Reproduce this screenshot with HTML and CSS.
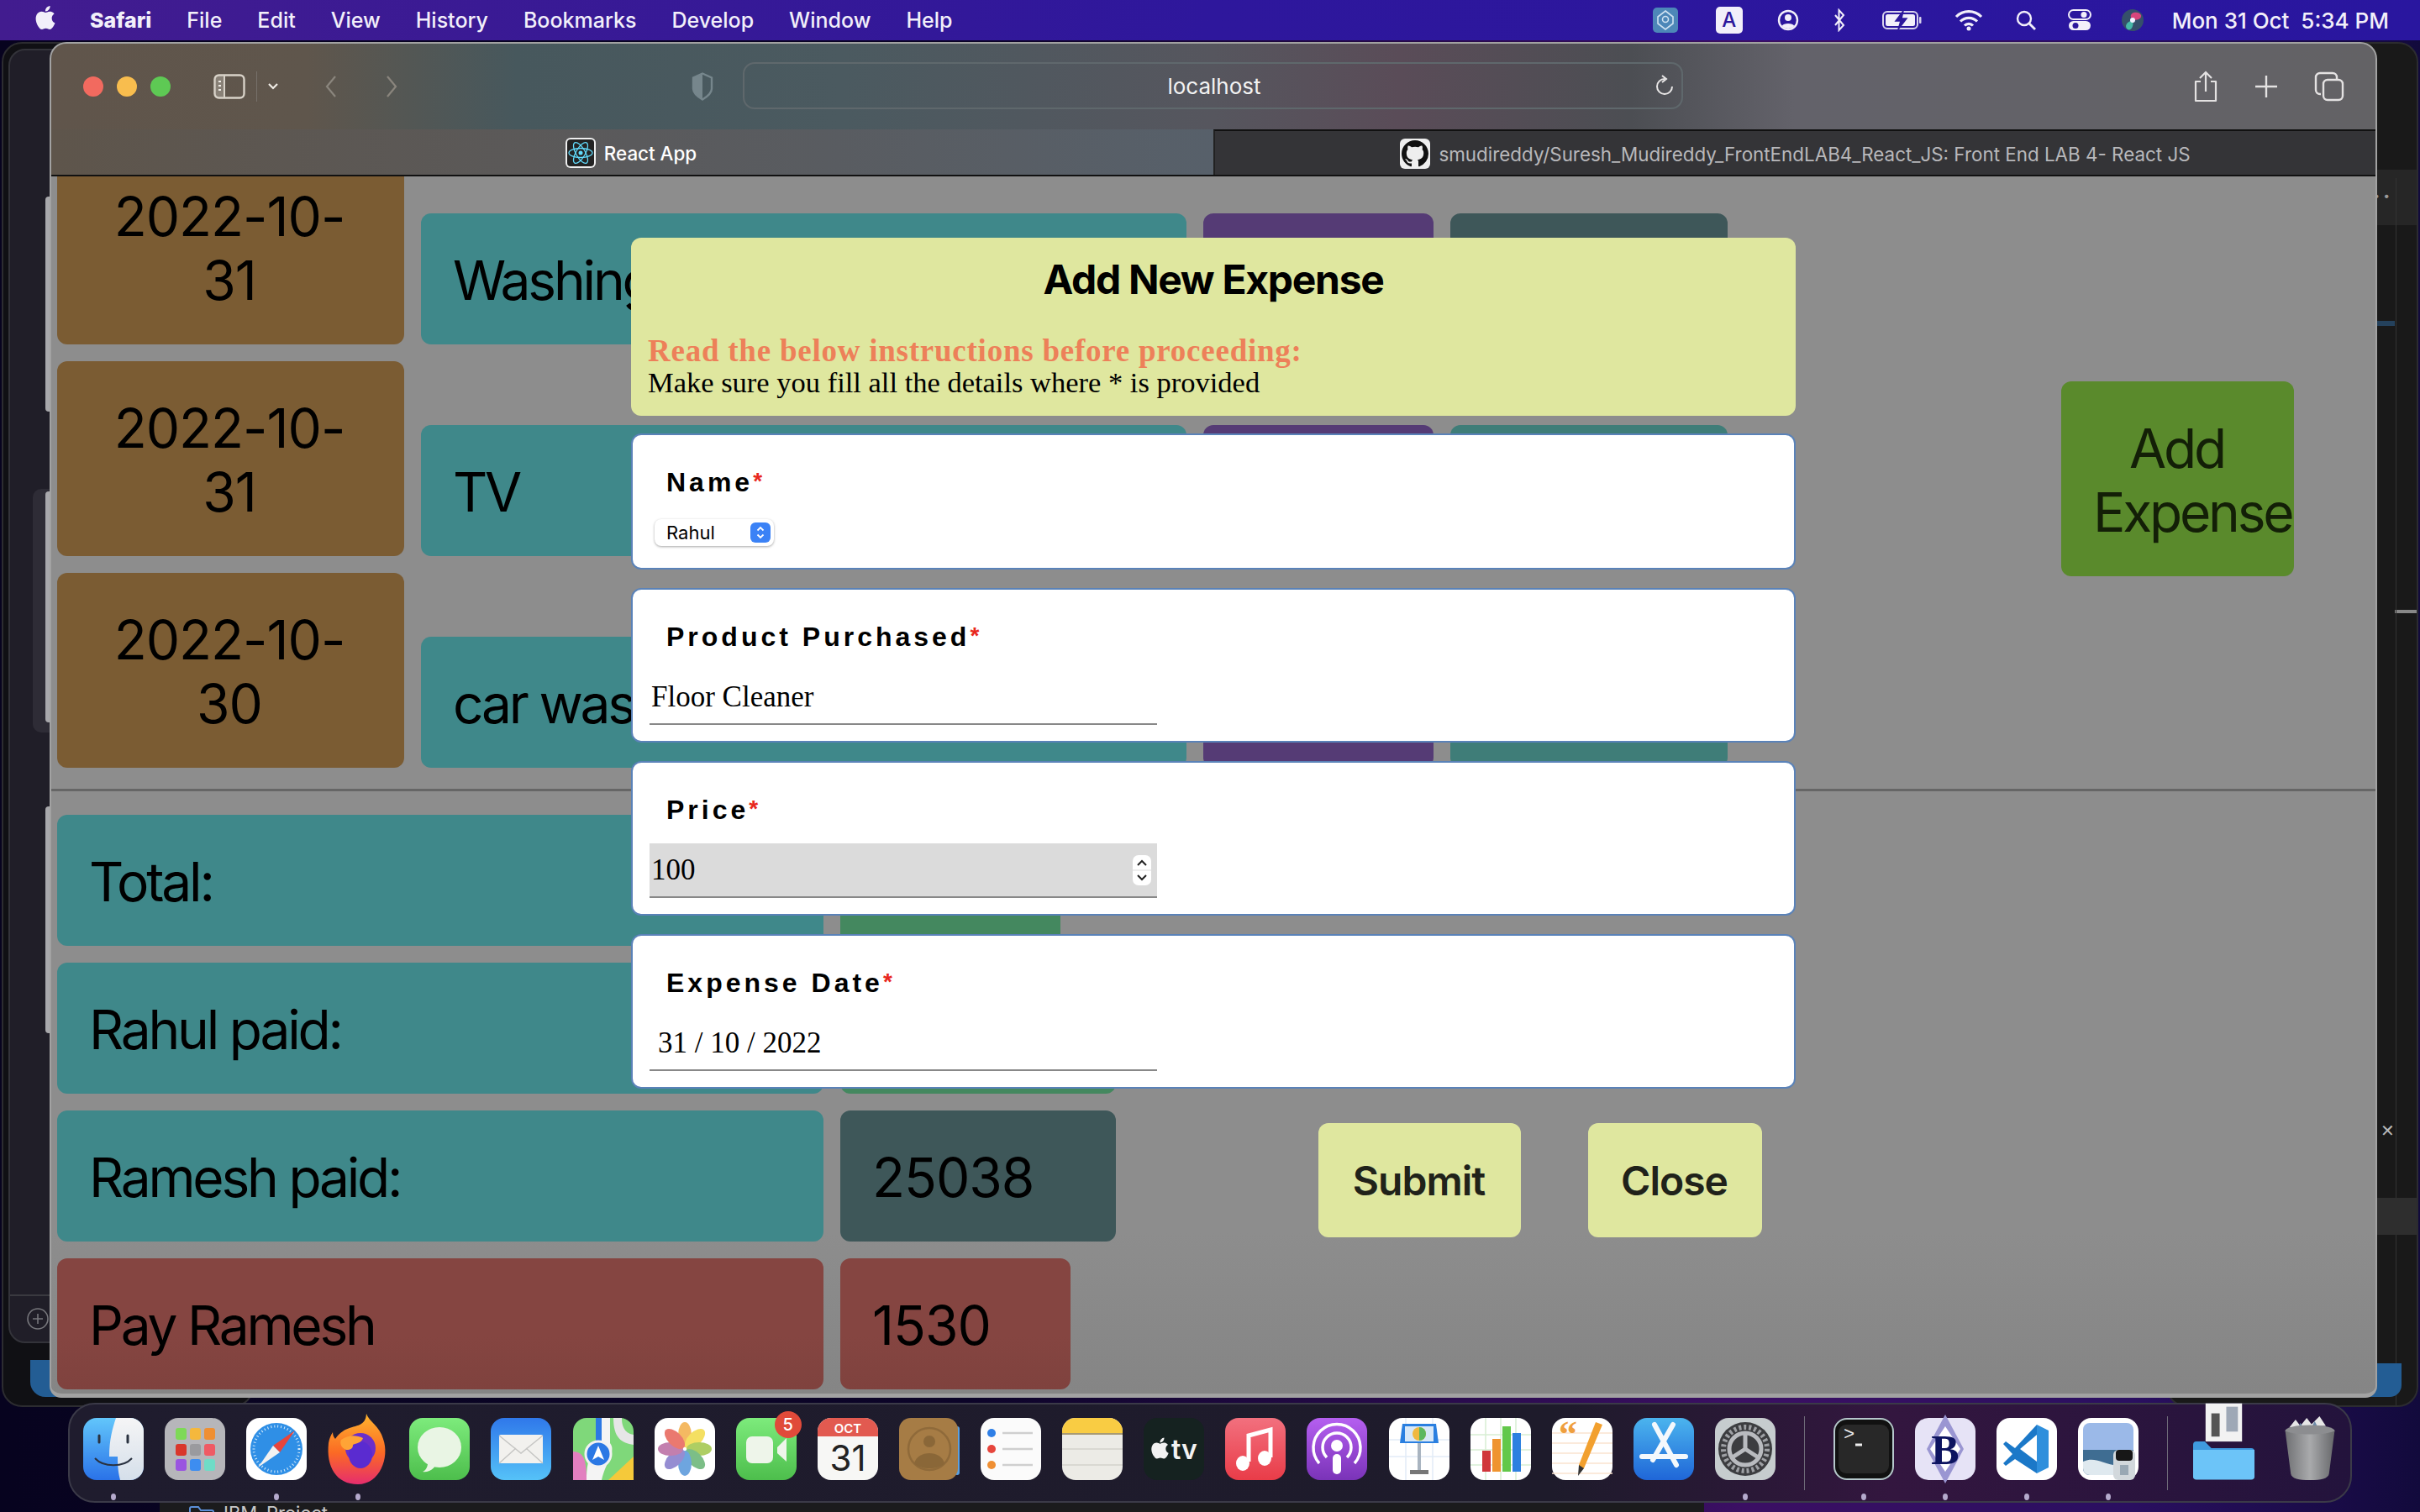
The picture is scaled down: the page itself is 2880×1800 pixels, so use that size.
FILE: index.html
```html
<!DOCTYPE html>
<html lang="en">
<head>
  <meta charset="UTF-8" />
  <title>React App</title>
  <link rel="stylesheet" href="styles.css">
</head>
<body>
  <svg class="defs" width="0" height="0">
    <defs>
      <linearGradient id="gFinder" x1="0" y1="0" x2="0" y2="1"><stop offset="0" stop-color="#62c6fb"/><stop offset="1" stop-color="#2a72e8"/></linearGradient>
      <linearGradient id="gFinder2" x1="0" y1="0" x2="0" y2="1"><stop offset="0" stop-color="#f5f5f6"/><stop offset="1" stop-color="#d5dfea"/></linearGradient>
      <linearGradient id="gGreen" x1="0" y1="0" x2="0" y2="1"><stop offset="0" stop-color="#7deb7c"/><stop offset="1" stop-color="#4dbe4c"/></linearGradient>
      <linearGradient id="gMail" x1="0" y1="0" x2="0" y2="1"><stop offset="0" stop-color="#2f78ea"/><stop offset="1" stop-color="#55c2f8"/></linearGradient>
      <linearGradient id="gMusic" x1="0" y1="0" x2="0" y2="1"><stop offset="0" stop-color="#f2707e"/><stop offset="1" stop-color="#e93c48"/></linearGradient>
      <linearGradient id="gPod" x1="0" y1="0" x2="0" y2="1"><stop offset="0" stop-color="#b55ff0"/><stop offset="1" stop-color="#7a33b8"/></linearGradient>
      <linearGradient id="gStore" x1="0" y1="0" x2="0" y2="1"><stop offset="0" stop-color="#4bb4ee"/><stop offset="1" stop-color="#1f66d8"/></linearGradient>
      <linearGradient id="gFox" x1="0" y1="0" x2="0" y2="1"><stop offset="0" stop-color="#ffb52e"/><stop offset=".55" stop-color="#fb6a24"/><stop offset="1" stop-color="#e62d6e"/></linearGradient>
      <linearGradient id="gTrash" x1="0" y1="0" x2="1" y2="0"><stop offset="0" stop-color="#6f7073"/><stop offset=".5" stop-color="#a9aaac"/><stop offset="1" stop-color="#66676a"/></linearGradient>
    </defs>
  </svg>

  <div class="backwin backwin-left">
    <span class="backwin-letter">R</span>
    <div class="side-panel">
      <div class="side-foot">
        <svg class="side-plus" viewBox="0 0 26 26"><circle cx="13" cy="13" r="12" fill="none" stroke="#77777c" stroke-width="1.6"/><path d="M13 7v12M7 13h12" stroke="#77777c" stroke-width="1.6"/></svg>
      </div>
    </div>
    <div class="side-card"></div>
    <div class="edge edge-a"></div>
    <div class="edge edge-b"></div>
    <div class="edge edge-c"></div>
    <div class="blue-tile"></div>
  </div>
  <div class="backwin backwin-right">
    <div class="right-band"></div>
    <span class="backwin-dots">• •</span>
    <div class="right-rule"></div>
    <div class="right-code"></div>
    <div class="right-split"></div>
    <span class="backwin-close">✕</span>
    <div class="right-row"></div>
    <div class="blue-tile-right"></div>
  </div>
  <div class="under-panel">
    <svg class="under-folder" viewBox="0 0 30 24"><path d="M1 23V3a2 2 0 012-2h8l3 4h13a2 2 0 012 2v16" fill="none" stroke="#5b8fd8" stroke-width="2"/></svg>
    <span class="under-label">IBM_Project</span>
  </div>

  <header class="menubar">
    <svg class="apple" viewBox="0 0 24 24"><path fill="#f2effa" d="M12.152 6.896c-.948 0-2.415-1.078-3.96-1.04-2.04.027-3.91 1.183-4.961 3.014-2.117 3.675-.546 9.103 1.519 12.09 1.013 1.454 2.208 3.09 3.792 3.039 1.52-.065 2.09-.987 3.935-.987 1.831 0 2.35.987 3.96.948 1.637-.026 2.676-1.48 3.676-2.948 1.156-1.688 1.636-3.325 1.662-3.415-.039-.013-3.182-1.221-3.22-4.857-.026-3.04 2.48-4.494 2.597-4.559-1.429-2.09-3.623-2.324-4.39-2.376-2-.156-3.675 1.09-4.61 1.09zM15.53 3.83c.843-1.012 1.4-2.427 1.245-3.83-1.207.052-2.662.805-3.532 1.818-.78.896-1.454 2.338-1.273 3.714 1.338.104 2.715-.688 3.56-1.702"/></svg>
    <nav class="menu">
      <span class="menu-app">Safari</span>
      <span>File</span>
      <span>Edit</span>
      <span>View</span>
      <span>History</span>
      <span>Bookmarks</span>
      <span>Develop</span>
      <span>Window</span>
      <span>Help</span>
    </nav>
    <div class="status">
      <svg class="st st-vpn" viewBox="0 0 30 30"><rect width="30" height="30" rx="5" fill="#4d87b8"/><path d="M15 4l9 7v8l-9 7-9-7v-8z" fill="none" stroke="#cfe2f2" stroke-width="1.6"/><circle cx="15" cy="14" r="3.5" fill="none" stroke="#cfe2f2" stroke-width="1.6"/></svg>
      <span class="st-input">A</span>
      <svg class="st st-user" viewBox="0 0 26 26"><circle cx="13" cy="13" r="11" fill="none" stroke="#f2effa" stroke-width="2.4"/><circle cx="13" cy="10" r="4" fill="#f2effa"/><path d="M5.5 20c2-4 13-4 15 0a11 11 0 01-15 0z" fill="#f2effa"/></svg>
      <svg class="st st-bt" viewBox="0 0 16 28"><path d="M3 8l10 12-5.500 6V2L13 8 3 20" fill="none" stroke="#f2effa" stroke-width="2"/></svg>
      <svg class="st st-batt" viewBox="0 0 48 24"><rect x="1" y="2" width="41" height="20" rx="5" fill="none" stroke="#d9d4ee" stroke-width="2"/><rect x="4" y="5" width="35" height="14" rx="2.500" fill="#f2effa"/><rect x="44" y="8" width="2.500" height="8" rx="1" fill="#d9d4ee"/><path d="M25 1l-9 12h6l-3 10 10-13h-6z" fill="#2c179c" stroke="#2c179c" stroke-width="1.500"/></svg>
      <svg class="st st-wifi" viewBox="0 0 34 26"><path d="M2 9a21 21 0 0130 0M7 14.500a14 14 0 0120 0M12 19.500a7 7 0 0110 0" fill="none" stroke="#f2effa" stroke-width="3.200"/><circle cx="17" cy="23" r="2.500" fill="#f2effa"/></svg>
      <svg class="st st-search" viewBox="0 0 26 26"><circle cx="11" cy="11" r="8" fill="none" stroke="#f2effa" stroke-width="2.400"/><path d="M17 17l7 7" stroke="#f2effa" stroke-width="2.800"/></svg>
      <svg class="st st-ctrl" viewBox="0 0 28 28"><rect x="1" y="2" width="26" height="11" rx="5.500" fill="none" stroke="#f2effa" stroke-width="2"/><circle cx="19" cy="7.500" r="3.500" fill="#f2effa"/><rect x="1" y="15" width="26" height="11" rx="5.500" fill="#f2effa"/><circle cx="9" cy="20.500" r="3.500" fill="#2c179c"/></svg>
      <svg class="st st-siri" viewBox="0 0 28 28"><circle cx="14" cy="14" r="13" fill="#35506a"/><path d="M14 14C6 4 22 2 24 8c1 5-5 6-10 6z" fill="#d8457c"/><path d="M14 14c-8 2-10 8-6 11 4 2 8-4 6-11z" fill="#46b9a8"/><circle cx="14" cy="14" r="3" fill="#f2f2ff"/></svg>
      <span class="clock">Mon 31 Oct&nbsp; 5:34 PM</span>
    </div>
  </header>

  <div class="window">
    <div class="toolbar">
      <div class="lights">
        <span class="light light-red"></span>
        <span class="light light-yellow"></span>
        <span class="light light-green"></span>
      </div>
      <svg class="tb-sidebar" viewBox="0 0 38 30"><rect x="1.500" y="1.500" width="35" height="27" rx="5" fill="none" stroke="#d8d2c8" stroke-width="2.400"/><rect x="2" y="2" width="11" height="26" rx="4" fill="#d8d2c8" opacity=".35"/><path d="M13 2v26" stroke="#d8d2c8" stroke-width="2"/><path d="M6 9h3M6 14h3M6 19h3" stroke="#f0ece6" stroke-width="2"/></svg>
      <span class="tb-sep"></span>
      <svg class="tb-chev" viewBox="0 0 14 10"><path d="M2 2l5 5 5-5" fill="none" stroke="#f0ece6" stroke-width="2.200"/></svg>
      <svg class="tb-nav tb-back" viewBox="0 0 16 28"><path d="M13 2L3 14l10 12" fill="none" stroke="#8a857d" stroke-width="2.200"/></svg>
      <svg class="tb-nav tb-fwd" viewBox="0 0 16 28"><path d="M3 2l10 12L3 26" fill="none" stroke="#8a857d" stroke-width="2.200"/></svg>
      <svg class="tb-shield" viewBox="0 0 28 34"><path d="M14 1.500l11 5v13c0 6-6 10-11 13-5-3-11-7-11-13v-13z" fill="none" stroke="#76868c" stroke-width="2.400"/><path d="M14 1.500l-11 5v13c0 6 6 10 11 13z" fill="#76868c"/></svg>
      <div class="urlbar">
        <span class="url-text">localhost</span>
        <svg class="url-reload" viewBox="0 0 24 26"><path d="M12 5a9 9 0 109 9" fill="none" stroke="#e8e6e6" stroke-width="2"/><path d="M9 1l5 4-5 4" fill="none" stroke="#e8e6e6" stroke-width="2"/></svg>
      </div>
      <div class="tb-actions">
        <svg class="tb-share" viewBox="0 0 30 38"><path d="M9 13H3v23h24V13h-6" fill="none" stroke="#e4e2e2" stroke-width="2.200" stroke-linejoin="round"/><path d="M15 25V2M8 9l7-7 7 7" fill="none" stroke="#e4e2e2" stroke-width="2.200"/></svg>
        <svg class="tb-plus" viewBox="0 0 28 28"><path d="M14 1v26M1 14h26" stroke="#e4e2e2" stroke-width="2.400"/></svg>
        <svg class="tb-tabs" viewBox="0 0 36 36"><rect x="11" y="10" width="23" height="24" rx="5" fill="none" stroke="#e4e2e2" stroke-width="2.400"/><path d="M8 27H7a5 5 0 01-5-5V7a5 5 0 015-5h15a5 5 0 015 5v2" fill="none" stroke="#e4e2e2" stroke-width="2.400"/></svg>
      </div>
    </div>
    <div class="tabbar">
      <div class="tab tab-active">
        <svg class="favicon" viewBox="0 0 36 36"><rect width="36" height="36" rx="6" fill="#eee"/><rect x="2" y="2" width="32" height="32" rx="4" fill="#232323"/><g fill="none" stroke="#61dafb" stroke-width="1.300"><ellipse cx="18" cy="18" rx="14" ry="5.500"/><ellipse cx="18" cy="18" rx="14" ry="5.500" transform="rotate(60 18 18)"/><ellipse cx="18" cy="18" rx="14" ry="5.500" transform="rotate(120 18 18)"/></g><circle cx="18" cy="18" r="2.500" fill="#61dafb"/></svg>
        <span>React App</span>
      </div>
      <div class="tab tab-idle">
        <svg class="favicon" viewBox="0 0 36 36"><rect width="36" height="36" rx="6" fill="#eee"/><svg x="2" y="2" width="32" height="32" viewBox="0 0 16 16"><path fill="#111" d="M8 0C3.58 0 0 3.58 0 8c0 3.54 2.290 6.530 5.470 7.590.4.070.55-.17.55-.38 0-.19-.01-.82-.01-1.490-2.010.37-2.530-.49-2.690-.94-.09-.23-.48-.94-.82-1.130-.28-.15-.68-.52-.01-.53.63-.01 1.080.58 1.230.82.72 1.210 1.870.87 2.330.66.07-.52.28-.87.51-1.070-1.780-.2-3.640-.89-3.640-3.950 0-.87.31-1.590.82-2.150-.08-.2-.36-1.020.08-2.120 0 0 .67-.21 2.200.82.64-.18 1.320-.27 2-.27.68 0 1.360.09 2 .27 1.530-1.040 2.200-.82 2.200-.82.44 1.100.16 1.920.08 2.120.51.56.82 1.270.82 2.150 0 3.070-1.870 3.750-3.650 3.950.29.25.54.73.54 1.480 0 1.070-.01 1.930-.01 2.200 0 .21.15.46.55.38A8.013 8.013 0 0016 8c0-4.420-3.580-8-8-8z"/></svg></svg>
        <span>smudireddy/Suresh_Mudireddy_FrontEndLAB4_React_JS: Front End LAB 4- React JS</span>
      </div>
    </div>

    <main class="page">
      <section class="expenses">
        <div class="expense-list">
          <div class="expense-row">
            <div class="box date">2022-10-31</div>
            <div class="box item">Washing Machine</div>
            <div class="box price"></div>
            <div class="box payer"></div>
          </div>
          <div class="expense-row">
            <div class="box date">2022-10-31</div>
            <div class="box item">TV</div>
            <div class="box price"></div>
            <div class="box payer payer-alt"></div>
          </div>
          <div class="expense-row">
            <div class="box date">2022-10-30</div>
            <div class="box item">car wash</div>
            <div class="box price"></div>
            <div class="box payer payer-alt"></div>
          </div>
        </div>
        <div class="box add-btn">Add Expense</div>
      </section>

      <section class="summary">
        <div class="summary-row">
          <div class="box label">Total:</div>
          <div class="box value value-total"></div>
        </div>
        <div class="summary-row">
          <div class="box label">Rahul paid:</div>
          <div class="box value value-rahul"></div>
        </div>
        <div class="summary-row">
          <div class="box label">Ramesh paid:</div>
          <div class="box value value-ramesh">25038</div>
        </div>
        <div class="summary-row">
          <div class="box label label-pay">Pay Ramesh</div>
          <div class="box value value-pay">1530</div>
        </div>
      </section>
    </main>

    <div class="modal">
      <div class="modal-head">
        <h2>Add New Expense</h2>
        <p class="warn">Read the below instructions before proceeding:</p>
        <p class="hint">Make sure you fill all the details where * is provided</p>
      </div>
      <div class="field field-name">
        <div class="field-label">Name<span class="req">*</span></div>
        <div class="select">
          <span>Rahul</span>
          <span class="select-arrows"><svg viewBox="0 0 12 20"><path d="M2.500 7.500L6 4l3.500 3.500M2.500 12.500L6 16l3.500-3.500" fill="none" stroke="#fff" stroke-width="1.800"/></svg></span>
        </div>
      </div>
      <div class="field">
        <div class="field-label">Product Purchased<span class="req">*</span></div>
        <div class="input">Floor Cleaner</div>
      </div>
      <div class="field">
        <div class="field-label">Price<span class="req">*</span></div>
        <div class="input input-focus">
          <span>100</span>
          <span class="stepper"><svg viewBox="0 0 22 36"><rect width="22" height="36" rx="7" fill="#fff"/><path d="M0 18h22" stroke="#ddd" stroke-width="1"/><path d="M6 12l5-5 5 5M6 24l5 5 5-5" fill="none" stroke="#222" stroke-width="2"/></svg></span>
        </div>
      </div>
      <div class="field">
        <div class="field-label">Expense Date<span class="req">*</span></div>
        <div class="input input-date">31 / 10 / 2022</div>
      </div>
      <div class="modal-actions">
        <div class="modal-btn btn-submit">Submit</div>
        <div class="modal-btn btn-close">Close</div>
      </div>
    </div>
  </div>

  <footer class="dock">
    <div class="dock-item"><svg class="icon" viewBox="0 0 72 74"><rect width="72" height="74" rx="16" fill="url(#gFinder)"/><path d="M39 0h17a16 16 0 0116 16v42a16 16 0 01-16 16H44c-2-8-3-14-3-28H31c0-20 4-34 8-46z" fill="url(#gFinder2)"/><path d="M19 21v8M53 21v8" stroke="#2a3240" stroke-width="3" stroke-linecap="round"/><path d="M14 48c10 11 34 11 44 0" fill="none" stroke="#2a3240" stroke-width="2"/></svg><i class="dot"></i></div>
    <div class="dock-item"><svg class="icon" viewBox="0 0 72 74"><rect width="72" height="74" rx="16" fill="#b6b6ba"/><g><rect x="13" y="12" width="13" height="14" rx="3" fill="#7ed957"/><rect x="30" y="12" width="13" height="14" rx="3" fill="#f5b83d"/><rect x="47" y="12" width="13" height="14" rx="3" fill="#ef8f33"/><rect x="13" y="31" width="13" height="14" rx="3" fill="#d9362b"/><rect x="30" y="31" width="13" height="14" rx="3" fill="#9a9a9e"/><rect x="47" y="31" width="13" height="14" rx="3" fill="#ef5a64"/><rect x="13" y="49" width="13" height="14" rx="3" fill="#9a55e0"/><rect x="30" y="49" width="13" height="14" rx="3" fill="#3d8df0"/><rect x="47" y="49" width="13" height="14" rx="3" fill="#6fdcc7"/></g></svg><i class="dot dot-off"></i></div>
    <div class="dock-item"><svg class="icon" viewBox="0 0 72 74"><rect width="72" height="74" rx="16" fill="#fff"/><circle cx="36" cy="37" r="31" fill="#2f8fe6"/><circle cx="36" cy="37" r="27" fill="none" stroke="#d6ecfb" stroke-width="3" stroke-dasharray="1 3"/><path d="M58 15L32 33l8 8z" fill="#e8453c"/><path d="M14 59l18-26 8 8z" fill="#f2f2f2"/></svg><i class="dot"></i></div>
    <div class="dock-item"><svg class="icon" viewBox="0 0 72 74"><path d="M46-5c3 9 16 15 20 30 8 22-4 54-30 54S-2 58 1 30c1-6 3-10 5-13 0 3 1 6 3 8 4-6 7-8 12-11 14-6 24-4 25-19z" fill="url(#gFox)"/><circle cx="39" cy="36" r="18" fill="#6b2fc9"/><ellipse cx="39" cy="44" rx="14" ry="16" fill="#5a2bd0"/><path d="M16 26c8-6 18-6 26-2-2 6-8 6-12 8 0 4-2 6-8 6-6-2-8-8-6-12z" fill="#ffa436"/></svg><i class="dot"></i></div>
    <div class="dock-item"><svg class="icon" viewBox="0 0 72 74"><rect width="72" height="74" rx="16" fill="url(#gGreen)"/><ellipse cx="36" cy="35" rx="26" ry="24" fill="#e9f5e4"/><path d="M22 54c0 5-3 9-6 10 6 1 12-2 15-7z" fill="#e9f5e4"/></svg><i class="dot dot-off"></i></div>
    <div class="dock-item"><svg class="icon" viewBox="0 0 72 74"><rect width="72" height="74" rx="16" fill="url(#gMail)"/><rect x="10" y="20" width="52" height="34" rx="2" fill="#f2f1ee"/><path d="M10 21l26 21 26-21M10 54l20-18M62 54L42 36" fill="none" stroke="#c6c6c4" stroke-width="1.500"/></svg><i class="dot dot-off"></i></div>
    <div class="dock-item"><svg class="icon" viewBox="0 0 72 74"><rect width="72" height="74" rx="16" fill="#7fd87a"/><path d="M0 40c14 0 16 14 16 34H0z" fill="#e27fc0"/><path d="M42 74L72 46v28z" fill="#f5c93a"/><path d="M48 0c0 24 10 30 24 32V20C60 18 58 8 58 0z" fill="#e6e6e6"/><path d="M16 74c0-30 10-40 16-50V0h12v30c8 10-6 24-10 44z" fill="#f4f4f4"/><rect x="27" y="0" width="7" height="30" fill="#2b78e4"/><circle cx="30" cy="43" r="15" fill="#2b78e4" stroke="#f2f2f2" stroke-width="3"/><path d="M30 33l7 17-7-4-7 4z" fill="#fff"/></svg><i class="dot dot-off"></i></div>
    <div class="dock-item"><svg class="icon" viewBox="0 0 72 74"><rect width="72" height="74" rx="16" fill="#fff"/><g opacity=".8"><ellipse cx="36" cy="20" rx="8" ry="15" fill="#f2a83b"/><ellipse cx="36" cy="20" rx="8" ry="15" fill="#f2d83b" transform="rotate(45 36 37)"/><ellipse cx="36" cy="20" rx="8" ry="15" fill="#9ac23d" transform="rotate(90 36 37)"/><ellipse cx="36" cy="20" rx="8" ry="15" fill="#5cae6a" transform="rotate(135 36 37)"/><ellipse cx="36" cy="20" rx="8" ry="15" fill="#4b8fd8" transform="rotate(180 36 37)"/><ellipse cx="36" cy="20" rx="8" ry="15" fill="#7b71c8" transform="rotate(225 36 37)"/><ellipse cx="36" cy="20" rx="8" ry="15" fill="#b5609a" transform="rotate(270 36 37)"/><ellipse cx="36" cy="20" rx="8" ry="15" fill="#e5584c" transform="rotate(315 36 37)"/></g></svg><i class="dot dot-off"></i></div>
    <div class="dock-item"><svg class="icon" viewBox="0 0 72 74"><rect width="72" height="74" rx="16" fill="url(#gGreen)"/><rect x="12" y="22" width="32" height="32" rx="7" fill="#eef5ea"/><path d="M49 35l11-11v28L49 42z" fill="#eef5ea"/></svg><span class="badge">5</span><i class="dot dot-off"></i></div>
    <div class="dock-item"><svg class="icon" viewBox="0 0 72 74"><rect width="72" height="74" rx="16" fill="#f7f7f5"/><path d="M0 22V16A16 16 0 0116 0h40a16 16 0 0116 16v6z" fill="#e25a50"/><text x="36" y="18" class="cal-month">OCT</text><text x="36" y="63" class="cal-day">31</text></svg><i class="dot dot-off"></i></div>
    <div class="dock-item"><svg class="icon" viewBox="0 0 72 74"><rect x="66" y="10" width="6" height="58" rx="3" fill="#5aa0e0"/><rect width="70" height="74" rx="14" fill="#a67c45"/><circle cx="36" cy="37" r="25" fill="none" stroke="#8f6a3a" stroke-width="2.500"/><circle cx="36" cy="28" r="7" fill="#8a6738"/><path d="M18 54c4-16 32-16 36 0-8 8-28 8-36 0z" fill="#8a6738"/></svg><i class="dot dot-off"></i></div>
    <div class="dock-item"><svg class="icon" viewBox="0 0 72 74"><rect width="72" height="74" rx="16" fill="#fbfbfb"/><circle cx="13" cy="18" r="5" fill="#2f7fe6"/><circle cx="13" cy="37" r="5" fill="#e6453c"/><circle cx="13" cy="56" r="5" fill="#ef8f33"/><path d="M26 18h36M26 37h36M26 56h36" stroke="#cfcfcf" stroke-width="2.500"/></svg><i class="dot dot-off"></i></div>
    <div class="dock-item"><svg class="icon" viewBox="0 0 72 74"><rect width="72" height="74" rx="16" fill="#ecebe6"/><path d="M0 18V16A16 16 0 0116 0h40a16 16 0 0116 16v2z" fill="#f9cc43"/><rect y="18" width="72" height="2" fill="#a89a72"/><path d="M0 37h72M0 56h72" stroke="#d9d8d2" stroke-width="2"/></svg><i class="dot dot-off"></i></div>
    <div class="dock-item"><svg class="icon" viewBox="0 0 72 74"><rect width="72" height="74" rx="16" fill="#152220"/><svg x="7" y="22" width="25" height="28" viewBox="0 0 24 24"><path fill="#f2f2f2" d="M12.152 6.896c-.948 0-2.415-1.078-3.96-1.040-2.040.027-3.910 1.183-4.961 3.014-2.117 3.675-.546 9.103 1.519 12.090 1.013 1.454 2.208 3.090 3.792 3.039 1.520-.065 2.090-.987 3.935-.987 1.831 0 2.350.987 3.960.948 1.637-.026 2.676-1.480 3.676-2.948 1.156-1.688 1.636-3.325 1.662-3.415-.039-.013-3.182-1.221-3.220-4.857-.026-3.040 2.480-4.494 2.597-4.559-1.429-2.090-3.623-2.324-4.390-2.376-2-.156-3.675 1.090-4.610 1.090zM15.530 3.830c.843-1.012 1.400-2.427 1.245-3.830-1.207.052-2.662.805-3.532 1.818-.78.896-1.454 2.338-1.273 3.714 1.338.104 2.715-.688 3.560-1.702"/></svg><text x="33" y="49" class="tv">tv</text></svg><i class="dot dot-off"></i></div>
    <div class="dock-item"><svg class="icon" viewBox="0 0 72 74"><rect width="72" height="74" rx="16" fill="url(#gMusic)"/><path d="M28 52V21l26-7v33" fill="none" stroke="#fff" stroke-width="5"/><ellipse cx="21" cy="54" rx="8" ry="9" fill="#fff"/><ellipse cx="47" cy="48" rx="8" ry="9" fill="#fff"/></svg><i class="dot dot-off"></i></div>
    <div class="dock-item"><svg class="icon" viewBox="0 0 72 74"><rect width="72" height="74" rx="16" fill="url(#gPod)"/><g fill="none" stroke="#fff" stroke-width="3.500"><path d="M15 54a28 28 0 1142 0"/><path d="M24 47a17 17 0 1124 0"/></g><circle cx="36" cy="33" r="7" fill="#fff"/><rect x="31" y="43" width="10" height="24" rx="5" fill="#fff"/></svg><i class="dot dot-off"></i></div>
    <div class="dock-item"><svg class="icon" viewBox="0 0 72 74"><rect width="72" height="74" rx="16" fill="#fff"/><path d="M0 46h72M0 26h72M20 0v74M52 0v74" stroke="#e2ecf7" stroke-width="1.500"/><path d="M13 30l3-23h40l3 23z" fill="#2a7fe0"/><rect x="19" y="10" width="34" height="18" fill="#d8e8f8"/><circle cx="36" cy="19" r="8" fill="#f0b840"/><path d="M36 19V11a8 8 0 010 16z" fill="#5cb860"/><rect x="34" y="30" width="4" height="34" fill="#a9b4c0"/><rect x="25" y="62" width="22" height="5" fill="#777"/></svg><i class="dot dot-off"></i></div>
    <div class="dock-item"><svg class="icon" viewBox="0 0 72 74"><rect width="72" height="74" rx="16" fill="#fff"/><path d="M0 20h72M0 38h72M0 56h72M18 0v74M36 0v74M54 0v74" stroke="#d8eed4" stroke-width="1.500"/><rect x="14" y="39" width="10" height="25" fill="#d0363a"/><rect x="26" y="25" width="10" height="39" fill="#ef9430"/><rect x="38" y="10" width="10" height="54" fill="#62c84a"/><rect x="50" y="18" width="10" height="46" fill="#2d80e0"/></svg><i class="dot dot-off"></i></div>
    <div class="dock-item"><svg class="icon" viewBox="0 0 72 74"><rect width="72" height="74" rx="16" fill="#fff"/><path d="M0 18h72M0 30h72M0 42h72M0 54h72M0 66h72" stroke="#fae3cf" stroke-width="1.500"/><text x="8" y="34" class="quote">“</text><path d="M52 5l8 3-22 52-6 2 0-6z" fill="#f2a02e"/><path d="M32 56l6 4-7 9z" fill="#333"/></svg><i class="dot dot-off"></i></div>
    <div class="dock-item"><svg class="icon" viewBox="0 0 72 74"><rect width="72" height="74" rx="16" fill="url(#gStore)"/><path d="M25 8l26 48M47 8L23 50M10 46h52" fill="none" stroke="#f4f8fc" stroke-width="6" stroke-linecap="round"/></svg><i class="dot dot-off"></i></div>
    <div class="dock-item"><svg class="icon" viewBox="0 0 72 74"><rect width="72" height="74" rx="16" fill="#c6ccce"/><circle cx="36" cy="37" r="32" fill="#3c3d40"/><circle cx="36" cy="37" r="26" fill="none" stroke="#9ea0a4" stroke-width="6" stroke-dasharray="3 3"/><circle cx="36" cy="37" r="19" fill="none" stroke="#b9bbbf" stroke-width="5"/><path d="M36 37V17M36 37L19 48M36 37l17 11" stroke="#b9bbbf" stroke-width="5"/></svg><i class="dot"></i></div>
    <span class="dock-div"></span>
    <div class="dock-item"><svg class="icon" viewBox="0 0 72 74"><rect width="72" height="74" rx="16" fill="#111"/><rect x="1" y="1" width="70" height="72" rx="15" fill="none" stroke="#b6c8cc" stroke-width="2"/><rect x="6" y="8" width="60" height="58" rx="9" fill="#282828"/><text x="12" y="26" class="term">&gt;</text><path d="M26 32h8" stroke="#eee" stroke-width="3"/></svg><i class="dot"></i></div>
    <div class="dock-item"><svg class="icon" viewBox="0 0 72 74"><rect width="72" height="74" rx="16" fill="#e6e3f6"/><path d="M36-4L58 37 36 78 14 37z" fill="#9a96d2"/><path d="M36 10L54 37 36 64 18 37z" fill="#fff"/><text x="36" y="55" class="bb">B</text></svg><i class="dot"></i></div>
    <div class="dock-item"><svg class="icon" viewBox="0 0 72 74"><rect width="72" height="74" rx="16" fill="#fff"/><path d="M48 8l14 7v44l-14 7z" fill="#2f8fdc"/><path d="M48 8L22 36l-11-8-3 3 11 12-11 11 3 3 11-8 26 17v-14L28 37 48 20z" fill="#1b78c8"/></svg><i class="dot"></i></div>
    <div class="dock-item"><svg class="icon" viewBox="0 0 72 74"><rect width="72" height="74" rx="16" fill="#fff"/><rect x="6" y="6" width="60" height="62" rx="8" fill="#9bb9e8"/><path d="M6 38h60v22a8 8 0 01-8 8H14a8 8 0 01-8-8z" fill="#3f6d92"/><path d="M6 52c14-6 22 2 36 4v12H14a8 8 0 01-8-8z" fill="#dfe9ef"/><rect x="42" y="38" width="26" height="36" rx="6" fill="#d2d8dc"/><rect x="45" y="38" width="20" height="13" rx="4" fill="#171717"/><path d="M50 56h10v12H50z" fill="#99a8b4"/></svg><i class="dot"></i></div>
    <span class="dock-div dock-div-b"></span>
    <div class="dock-item dock-folder"><svg class="icon" viewBox="0 0 76 74"><rect x="15" y="-18" width="44" height="46" fill="#f2f2f2"/><rect x="40" y="-14" width="14" height="30" fill="#9ea8b6"/><rect x="22" y="-6" width="10" height="28" fill="#555"/><path d="M0 32a4 4 0 014-4h10l8 8h48a4 4 0 014 4v32H0z" fill="#3f9adf"/><path d="M0 38h74v32a4 4 0 01-4 4H4a4 4 0 01-4-4z" fill="#6cc4f8"/></svg><i class="dot dot-off"></i></div>
    <div class="dock-item dock-trash"><svg class="icon" viewBox="0 0 64 78"><path d="M6 12l8-10 6 8 8-10 6 8 10-10 8 12z" fill="#e6e6e6"/><path d="M20 6l6 10-10 0zM38 4l6 12h-12z" fill="#6c8aa8"/><ellipse cx="32" cy="16" rx="31" ry="7" fill="#8c8d90"/><path d="M1 16l7 54c1 6 10 8 24 8s23-2 24-8l7-54c-8 6-54 6-62 0z" fill="url(#gTrash)"/></svg><i class="dot dot-off"></i></div>
  </footer>
</body>
</html>
```

FILE: styles.css
```css
* {
  box-sizing: border-box;
}

body {
  position: relative;
  width: 2880px;
  height: 1800px;
  margin: 0;
  overflow: hidden;
  font-family: Inter, "Liberation Sans", sans-serif;
  color: #000;
  background: linear-gradient(90deg, #07031f 0%, #0c0428 40%, #3b0f63 72%, #2a0f60 88%, #120a3c 100%);
}

.defs {
  position: absolute;
}

/* menu bar */
.menubar {
  display: flex;
  align-items: center;
  height: 48px;
  padding: 0 37px 0 40px;
  color: #f2effa;
  background: linear-gradient(90deg, #421c8f 0%, #2e179c 50%, #29169f 100%);
  font-size: 25px;
  font-weight: 500;
}

.apple {
  width: 28px;
  height: 32px;
  margin-top: -6px;
}

.menu {
  display: flex;
  gap: 42px;
  margin-left: 39px;
}

.menu-app {
  font-weight: 800;
}

.status {
  display: flex;
  align-items: center;
  margin-left: auto;
}

.st {
  display: block;
  height: 28px;
}

.st-vpn {
  width: 30px;
  height: 32px;
  margin-right: 45px;
}

.st-input {
  width: 32px;
  height: 32px;
  margin-right: 41px;
  border-radius: 5px;
  background: #f2effa;
  color: #2c179c;
  font-size: 24px;
  line-height: 32px;
  text-align: center;
}

.st-user {
  width: 26px;
  margin-right: 40px;
}

.st-bt {
  width: 16px;
  margin-right: 43px;
}

.st-batt {
  width: 48px;
  margin-right: 38px;
}

.st-wifi {
  width: 34px;
  margin-right: 38px;
}

.st-search {
  width: 26px;
  margin-right: 37px;
}

.st-ctrl {
  width: 28px;
  margin-right: 35px;
}

.st-siri {
  width: 28px;
  margin-right: 33px;
}

.clock {
  font-size: 26px;
  white-space: nowrap;
}

/* windows behind safari */
.backwin {
  position: absolute;
  top: 50px;
  height: 1625px;
  border: 2px solid #2c2c30;
  background: #1d1c24;
}

.backwin-left {
  left: 2px;
  width: 300px;
  border-radius: 24px;
  background: #101014;
}

.backwin-letter {
  position: absolute;
  top: 122px;
  left: 36px;
  color: #55555a;
  font-size: 24px;
  font-weight: 600;
}

.side-panel {
  position: absolute;
  top: 6px;
  left: 6px;
  width: 200px;
  height: 1541px;
  border-radius: 20px;
  border: 2px solid #33333a;
  background: #201e28;
}

.side-foot {
  position: absolute;
  left: 0;
  right: 0;
  bottom: 0;
  height: 56px;
  border-top: 2px solid #3a3a40;
}

.side-plus {
  position: absolute;
  top: 14px;
  left: 20px;
  width: 26px;
  height: 26px;
}

.side-card {
  position: absolute;
  top: 530px;
  left: 35px;
  width: 30px;
  height: 290px;
  border-radius: 10px;
  background: #2e2c36;
}

.edge {
  position: absolute;
  left: 50px;
  width: 8px;
  border-radius: 4px 0 0 4px;
  background: #a8a8ac;
}

.edge-a {
  top: 182px;
  height: 256px;
}

.edge-b {
  top: 533px;
  height: 275px;
}

.edge-c {
  top: 908px;
  height: 270px;
}

.blue-tile {
  position: absolute;
  left: 32px;
  bottom: 10px;
  width: 200px;
  height: 44px;
  border-radius: 0 0 0 18px;
  background: #235d94;
}

.backwin-right {
  right: 2px;
  width: 300px;
  border-radius: 24px;
  background: #191919;
}

.right-band {
  position: absolute;
  top: 150px;
  left: 0;
  right: 0;
  height: 66px;
  background: #262626;
}

.backwin-dots {
  position: absolute;
  top: 172px;
  right: 32px;
  color: #9a9a9a;
  font-size: 14px;
}

.right-rule {
  position: absolute;
  top: 674px;
  right: 0;
  width: 26px;
  height: 4px;
  background: #888;
}

.right-code {
  position: absolute;
  top: 330px;
  right: 26px;
  width: 24px;
  height: 6px;
  background: #24415c;
}

.right-split {
  position: absolute;
  top: 160px;
  bottom: 0;
  right: 24px;
  width: 1px;
  background: #333;
}

.backwin-close {
  position: absolute;
  top: 1282px;
  right: 26px;
  color: #b8b8b8;
  font-size: 20px;
}

.right-row {
  position: absolute;
  top: 1374px;
  right: 0;
  width: 60px;
  height: 44px;
  background: #2e2e2e;
}

.blue-tile-right {
  position: absolute;
  right: 18px;
  bottom: 10px;
  width: 100px;
  height: 40px;
  border-radius: 0 0 14px 0;
  background: #235d94;
}

.under-panel {
  position: absolute;
  left: 190px;
  top: 1780px;
  width: 1838px;
  height: 20px;
  background: #1b1b1d;
}

.under-folder {
  position: absolute;
  top: 13px;
  left: 35px;
  width: 30px;
  height: 24px;
}

.under-label {
  position: absolute;
  top: 8px;
  left: 76px;
  color: #c8c8c8;
  font-size: 22px;
}

/* safari */
.window {
  position: absolute;
  top: 50px;
  left: 59px;
  display: flex;
  flex-direction: column;
  width: 2770px;
  height: 1614px;
  border: 2px solid #a2a2a2;
  border-bottom-width: 5px;
  border-radius: 20px 20px 14px 14px;
  overflow: hidden;
  background: linear-gradient(180deg, #8d8d8d 0%, #8d8d8d 88%, #858585 100%);
}

.toolbar {
  position: relative;
  display: flex;
  align-items: center;
  flex: none;
  height: 102px;
  padding-left: 38px;
  background: linear-gradient(90deg, #60554b 0%, #5f564c 11%, #47585d 20%, #4b5a60 34%, #56565e 50%, #5a4c58 58%, #4c4e53 68%, #63626a 75%, #636265 100%);
}

.lights {
  display: flex;
  gap: 16px;
}

.light {
  width: 24px;
  height: 24px;
  border-radius: 50%;
}

.light-red {
  background: #f26a5f;
}

.light-yellow {
  background: #f8bd4e;
}

.light-green {
  background: #5ec954;
}

.tb-sidebar {
  width: 38px;
  height: 30px;
  margin-left: 51px;
}

.tb-sep {
  width: 1px;
  height: 36px;
  margin-left: 13px;
  background: #77716a;
}

.tb-chev {
  width: 14px;
  height: 10px;
  margin-left: 12px;
}

.tb-nav {
  width: 16px;
  height: 28px;
}

.tb-back {
  margin-left: 54px;
}

.tb-fwd {
  margin-left: 56px;
}

.tb-shield {
  width: 28px;
  height: 34px;
  margin-left: 348px;
}

.urlbar {
  position: absolute;
  top: 22px;
  left: 823px;
  display: flex;
  align-items: center;
  justify-content: center;
  width: 1119px;
  height: 56px;
  padding-left: 3px;
  border: 2px solid #5f686c;
  border-radius: 14px;
  color: #f2f2f2;
  font-size: 26px;
}

.url-reload {
  position: absolute;
  top: 13px;
  right: 8px;
  width: 24px;
  height: 26px;
}

.tb-actions {
  display: flex;
  align-items: center;
  gap: 43px;
  margin-left: auto;
  margin-right: 37px;
}

.tb-share {
  width: 30px;
  height: 38px;
}

.tb-plus {
  width: 28px;
  height: 28px;
}

.tb-tabs {
  width: 36px;
  height: 36px;
}

.tabbar {
  display: flex;
  flex: none;
  height: 56px;
  border-bottom: 2px solid #111;
  font-size: 22.4px;
}

.tab {
  display: flex;
  align-items: center;
  justify-content: center;
  gap: 10px;
  width: 50%;
  padding-top: 2px;
}

.tab-active {
  padding-right: 3px;
  color: #fff;
  font-weight: 500;
  background: linear-gradient(90deg, #5e554b 0%, #5a5a5c 50%, #57606a 100%);
}

.tab-idle {
  border-top: 2px solid #111;
  border-left: 2px solid #222;
  color: #b8b8bb;
  background: #343437;
}

.favicon {
  width: 36px;
  height: 36px;
}

/* page behind the dialog */
.page {
  display: flex;
  flex-direction: column;
  flex: 1;
  min-height: 0;
  overflow: hidden;
}

.box {
  padding: 42px 40px 38px 38px;
  border-radius: 12px;
  font-size: 64px;
  line-height: 76px;
  letter-spacing: -3.2px;
}

.expenses {
  display: flex;
  align-items: flex-start;
  flex: none;
  height: 732px;
  padding-left: 7px;
  border-bottom: 3px solid #666;
}

.expense-list {
  display: flex;
  flex-direction: column;
  gap: 20px;
  width: 1988px;
  margin-top: -32px;
}

.expense-row {
  display: grid;
  grid-template-columns: 413px 911px 274px 330px;
  gap: 20px;
  align-items: end;
}

.date {
  height: 232px;
  padding-right: 41px;
  letter-spacing: -1px;
  background: #7b5c33;
  text-align: center;
}

.item {
  height: 156px;
  overflow: hidden;
  white-space: nowrap;
  background: #3f888a;
}

.price {
  height: 156px;
  background: #553b75;
}

.payer {
  height: 156px;
  background: #3e5759;
}

.payer-alt {
  background: #3f7d78;
}

.add-btn {
  width: 277px;
  margin-top: 244px;
  margin-left: 397px;
  text-align: center;
  color: #131f07;
  background: #5a8a2c;
}

.summary {
  display: flex;
  flex-direction: column;
  gap: 20px;
  padding: 28px 0 0 7px;
}

.summary-row {
  display: flex;
  gap: 20px;
}

.label {
  width: 912px;
  height: 156px;
  background: #3f888a;
}

.label-pay {
  background: linear-gradient(180deg, #854541 0%, #854541 60%, #7f423e 100%);
}

.value {
  height: 156px;
  white-space: nowrap;
  letter-spacing: -1px;
}

.value-total {
  width: 262px;
  background: #44885f;
}

.value-rahul {
  width: 328px;
  background: #44885f;
}

.value-ramesh {
  width: 328px;
  background: #3e5759;
}

.value-pay {
  width: 274px;
  background: linear-gradient(180deg, #854541 0%, #854541 60%, #7f423e 100%);
}

/* dialog */
.modal {
  position: absolute;
  top: 231px;
  left: 690px;
  display: flex;
  flex-direction: column;
  gap: 22px;
  width: 1386px;
  font-family: "Liberation Serif", serif;
}

.modal-head {
  height: 212px;
  margin-bottom: -1px;
  padding: 20px 20px 0;
  border-radius: 12px;
  background: #dfe79f;
}

.modal-head h2 {
  margin: 0 0 37px;
  font-family: Inter, "Liberation Sans", sans-serif;
  font-size: 48px;
  font-weight: 700;
  line-height: 60px;
  letter-spacing: -1.3px;
  text-align: center;
}

.modal-head p {
  margin: 0;
}

.warn {
  color: #ed8059;
  font-size: 37px;
  font-weight: 700;
  line-height: 36px;
  letter-spacing: 0.76px;
}

.hint {
  font-size: 34.5px;
  line-height: 38px;
}

.field {
  height: 184px;
  padding: 38px 20px 0;
  border: 2px solid #5a82b8;
  border-radius: 12px;
  background: #fff;
}

.field-name {
  height: 162px;
  padding-left: 26px;
}

.field-label {
  margin: 0 0 0 20px;
  font-family: "Liberation Sans", sans-serif;
  font-size: 32px;
  font-weight: 700;
  line-height: 36px;
  letter-spacing: 4px;
}

.field-name .field-label {
  margin-left: 14px;
}

.req {
  position: relative;
  top: -3px;
  color: #e8281e;
  font-size: 28px;
}

.select {
  display: flex;
  align-items: center;
  justify-content: space-between;
  width: 142px;
  height: 32px;
  margin-top: 24px;
  padding: 0 4px 0 14px;
  border-radius: 8px;
  background: #fff;
  box-shadow: 0 1px 3px rgba(0, 0, 0, 0.35);
  font-family: Inter, "Liberation Sans", sans-serif;
  font-size: 22px;
}

.select-arrows {
  display: flex;
  align-items: center;
  justify-content: center;
  width: 24px;
  height: 24px;
  border-radius: 6px;
  background: #3b82f6;
}

.select-arrows svg {
  width: 12px;
  height: 20px;
}

.input {
  display: flex;
  align-items: center;
  justify-content: space-between;
  width: 604px;
  height: 65px;
  margin-top: 20px;
  padding: 0 7px 0 2px;
  border-bottom: 2px solid #888;
  font-size: 35px;
}

.input-focus {
  background: #dbdbdb;
}

.stepper {
  display: flex;
}

.stepper svg {
  width: 22px;
  height: 36px;
}

.input-date {
  padding-left: 10px;
}

.modal-actions {
  display: flex;
  gap: 80px;
  margin-top: 19px;
  padding-left: 818px;
}

.modal-btn {
  display: flex;
  align-items: center;
  justify-content: center;
  height: 136px;
  padding-right: 2px;
  border-radius: 12px;
  background: #dfe79f;
  color: #20221a;
  font-family: Inter, "Liberation Sans", sans-serif;
  font-size: 48px;
  font-weight: 600;
  letter-spacing: -1px;
}

.btn-submit {
  width: 241px;
}

.btn-close {
  width: 207px;
}

/* dock */
.dock {
  position: absolute;
  top: 1670px;
  left: 81px;
  display: flex;
  align-items: flex-start;
  gap: 25.1px;
  width: 2718px;
  height: 119px;
  padding: 16px 0 0 16px;
  border: 2px solid #3b3a48;
  border-radius: 32px;
  background: linear-gradient(90deg, #1f1c2e 0%, #1e1b2b 65%, #33163f 80%, #23133c 100%);
}

.dock-item {
  position: relative;
  display: flex;
  flex-direction: column;
  align-items: center;
  width: 72px;
  flex: none;
}

.icon {
  display: block;
  width: 72px;
  height: 74px;
  overflow: visible;
}

.dot {
  width: 6px;
  height: 8px;
  margin-top: 16px;
  border-radius: 50%;
  background: #b5aacd;
}

.dot-off {
  visibility: hidden;
}

.dock-div {
  width: 1px;
  height: 88px;
  margin: -2px 9px 0;
  background: #6e6a78;
}

.dock-div-b {
  margin: -2px 6px 0 9px;
}

.dock-folder .icon {
  width: 75px;
}

.dock-trash {
  margin-left: 4px;
}

.dock-trash .icon {
  width: 64px;
}

.badge {
  position: absolute;
  top: -8px;
  right: -6px;
  width: 32px;
  height: 32px;
  border-radius: 50%;
  background: #e04a3a;
  color: #fff;
  font-size: 20px;
  font-weight: 500;
  line-height: 32px;
  text-align: center;
}

.cal-month {
  fill: #fff;
  font-size: 15px;
  font-weight: 600;
  text-anchor: middle;
}

.cal-day {
  fill: #222;
  font-size: 42px;
  text-anchor: middle;
}

.tv {
  fill: #f2f2f2;
  font-size: 32px;
  font-weight: 600;
}

.quote {
  fill: #ef9f3e;
  font-family: "Liberation Serif", serif;
  font-size: 44px;
  font-weight: 700;
}

.term {
  fill: #eee;
  font-family: "Liberation Mono", monospace;
  font-size: 22px;
}

.bb {
  fill: #0d1460;
  font-family: "Liberation Serif", serif;
  font-size: 50px;
  font-weight: 700;
  text-anchor: middle;
}
```
